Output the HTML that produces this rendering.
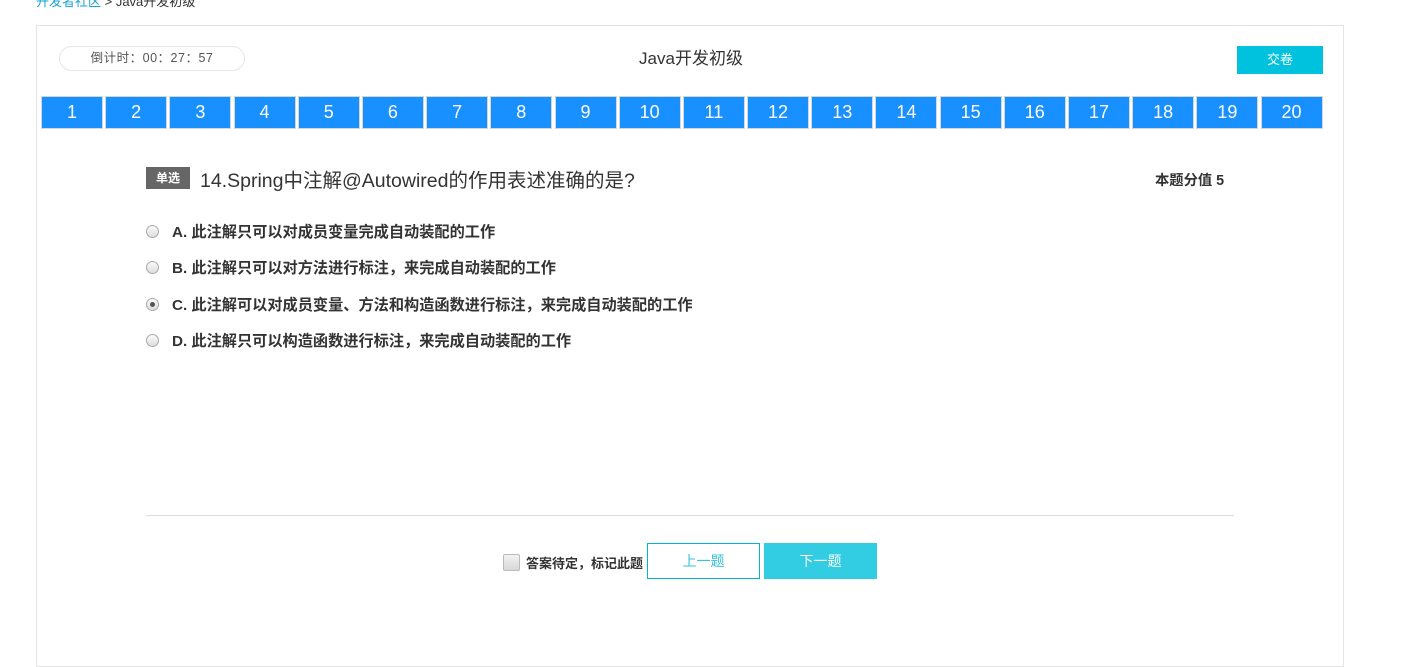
<!DOCTYPE html>
<html><head><meta charset="utf-8"><style>
body{margin:0;width:1405px;height:626px;overflow:hidden;background:#fff;font-family:"Liberation Sans","Noto Sans CJK SC",sans-serif;position:relative}
.a{position:absolute}
.crumb{left:36px;top:-9px;font-size:13px;color:#333;white-space:nowrap}
.box{left:36px;top:25px;width:1306px;height:640px;border:1px solid #e4e4e4}
.timer{left:59px;top:46px;width:184px;height:23px;border:1px solid #e6e6e6;border-radius:13px;font-size:12.5px;color:#555;line-height:23px;text-align:center;letter-spacing:0.5px}
.title{left:0;width:1382px;top:44px;text-align:center;font-size:17px;color:#333}
.submit{left:1237px;top:46px;width:86px;height:28px;background:#00c1de;color:#fff;font-size:13px;line-height:28px;text-align:center}
.nums{left:41px;top:96px;display:flex}
.nums div{width:60px;height:31px;margin-right:2.2px;background:#1890ff;border:1px solid #d6d6d6;box-sizing:content-box;color:#fff;font-size:18px;line-height:31px;text-align:center;flex:none}
.tag{left:146px;top:167px;width:44px;height:22px;background:#666;color:#fff;font-size:12px;font-weight:bold;line-height:22px;text-align:center}
.q{left:200px;top:164px;font-size:19.5px;color:#333}
.score{left:1155px;top:169px;font-size:14.3px;font-weight:bold;color:#333}
.opt{left:146px;font-size:15.2px;font-weight:bold;color:#333;white-space:nowrap}
.opt i{display:inline-block;width:11px;height:11px;border:1px solid #aaa;border-radius:50%;background:linear-gradient(#fafafa,#ddd);vertical-align:-1px;margin-right:13px;position:relative}
.opt i.on:after{content:"";position:absolute;left:3px;top:3px;width:5px;height:5px;border-radius:50%;background:#555}
.line{left:146px;top:515px;width:1088px;height:1px;background:#ddd}
.chk{left:503px;top:554px;width:15px;height:15px;border:1px solid #bbb;border-radius:2px;background:linear-gradient(#f2f2f2,#d8d8d8)}
.mark{left:526px;top:553px;font-size:13px;font-weight:bold;color:#333}
.prev{left:647px;top:543px;width:111px;height:34px;border:1px solid #00b4d8;color:#33c2e0;font-size:14px;line-height:34px;text-align:center}
.next{left:764px;top:543px;width:113px;height:36px;background:#33cde3;color:#fff;font-size:14px;line-height:36px;text-align:center}
</style></head><body>
<div class="a crumb"><span style="color:#1aa3d6">开发者社区</span> &gt; Java开发初级</div>
<div class="a box"></div>
<div class="a timer">倒计时：00：27：57</div>
<div class="a title">Java开发初级</div>
<div class="a submit">交卷</div>
<div class="a nums"><div>1</div><div>2</div><div>3</div><div>4</div><div>5</div><div>6</div><div>7</div><div>8</div><div>9</div><div>10</div><div>11</div><div>12</div><div>13</div><div>14</div><div>15</div><div>16</div><div>17</div><div>18</div><div>19</div><div>20</div></div>
<div class="a tag">单选</div>
<div class="a q">14.Spring中注解@Autowired的作用表述准确的是?</div>
<div class="a score">本题分值 5</div>
<div class="a opt" style="top:220px"><i></i>A. 此注解只可以对成员变量完成自动装配的工作</div>
<div class="a opt" style="top:256px"><i></i>B. 此注解只可以对方法进行标注，来完成自动装配的工作</div>
<div class="a opt" style="top:293px"><i class="on"></i>C. 此注解可以对成员变量、方法和构造函数进行标注，来完成自动装配的工作</div>
<div class="a opt" style="top:329px"><i></i>D. 此注解只可以构造函数进行标注，来完成自动装配的工作</div>
<div class="a line"></div>
<div class="a chk"></div>
<div class="a mark">答案待定，标记此题</div>
<div class="a prev">上一题</div>
<div class="a next">下一题</div>
</body></html>
